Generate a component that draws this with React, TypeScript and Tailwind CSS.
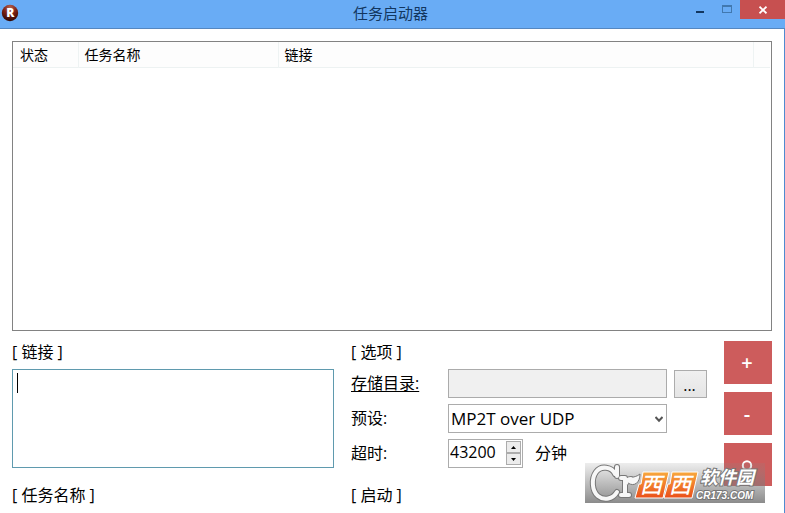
import type { ReactNode } from "react";

const buttonClass =
  "flex h-[43px] w-12 items-center justify-center bg-[#cd5c5c] pr-0.5 text-[20px] font-semibold leading-none text-white";

function Heading({ children }: { children: ReactNode }) {
  return <h2 className="h-[22px] text-[16px] leading-[22px]">{children}</h2>;
}

function TitleBar() {
  return (
    <header className="relative flex h-[29px] items-start justify-between border-b border-[#5587c0] bg-[#69acf5]">
      <svg className="ml-px mt-1 h-[18px] w-[18px]" viewBox="0 0 18 18" aria-hidden="true">
        <defs>
          <radialGradient id="badge" cx="0.5" cy="0.15" r="0.85">
            <stop offset="0" stopColor="#b5604c" />
            <stop offset="0.5" stopColor="#7a2014" />
            <stop offset="1" stopColor="#2c0605" />
          </radialGradient>
        </defs>
        <circle cx="9" cy="9" r="8.2" fill="url(#badge)" />
        <text x="9.3" y="13.2" textAnchor="middle" fontSize="12" fontWeight="800" fill="#fff" fontFamily="Open Sans, sans-serif">
          R
        </text>
      </svg>
      <h1 className="absolute inset-x-0 top-0 pr-1 text-center text-[15px] leading-[27px] text-[#12365f]">任务启动器</h1>
      <div className="relative flex">
        <button type="button" aria-label="最小化" className="flex h-[19px] w-7 items-start justify-center pt-[11px]">
          <span className="block h-0.5 w-2 bg-[#12365f]" />
        </button>
        <button type="button" aria-label="最大化" className="flex h-[19px] w-[26px] items-start justify-center pt-[5px]">
          <span className="block h-2 w-2.5 border border-t-2 border-[#4178af]" />
        </button>
        <button type="button" aria-label="关闭" className="flex h-[19px] w-[45px] items-center justify-center bg-[#c75050]">
          <svg className="h-2 w-2" viewBox="0 0 8 8" stroke="#fff" strokeWidth="1.8" aria-hidden="true">
            <path d="M0.5 0.7 7.5 7.3M7.5 0.7 0.5 7.3" />
          </svg>
        </button>
      </div>
    </header>
  );
}

function TaskTable() {
  return (
    <div className="h-[290px] border border-[#828282] bg-white pr-px">
      <table className="w-full table-fixed border-collapse text-left text-[14px] leading-6">
        <thead className="bg-[#fdfdfd]">
          <tr className="border-b border-[#edf2f2]">
            <th className="w-[65px] border-r border-[#eef3f3] pl-[7px] pt-px font-normal">状态</th>
            <th className="w-[200px] border-r border-[#eef3f3] pl-1.5 pt-px font-normal">任务名称</th>
            <th className="border-r border-[#eef3f3] pl-1.5 pt-px font-normal">链接</th>
            <th className="w-[17px]" />
          </tr>
        </thead>
      </table>
    </div>
  );
}

function Emblem({ stroke, width }: { stroke: string; width: number }) {
  return (
    <g fill="none" stroke={stroke} strokeLinecap="round" strokeLinejoin="round">
      <path strokeWidth={width} d="M32 4V13M30 11C27 4 16 2 11 9C6 16 7 28 13 33C19 38 28 36 32 29" />
      <path strokeWidth={width} d="M36 15H40V32M36 32H44M41 20C42 17 44 16 46 16" />
    </g>
  );
}

function Watermark() {
  return (
    <svg className="pointer-events-none absolute bottom-2.5 right-5 h-10 w-[180px]" viewBox="0 0 180 40" role="img" aria-label="西西软件园 CR173.COM">
      <defs>
        <linearGradient id="shade" x1="0" y1="0" x2="0" y2="1">
          <stop offset="0" stopColor="#888" stopOpacity="0.15" />
          <stop offset="0.5" stopColor="#7c7c7c" stopOpacity="0.5" />
          <stop offset="1" stopColor="#777" stopOpacity="0.85" />
        </linearGradient>
        <linearGradient id="orange" x1="0" y1="0" x2="0" y2="1">
          <stop offset="0" stopColor="#f8a83c" />
          <stop offset="1" stopColor="#ea4f1a" />
        </linearGradient>
      </defs>
      <rect width="180" height="40" fill="url(#shade)" />
      <Emblem stroke="#777" width={6} />
      <path d="M43 20C44 12 49 16 55 11C55 20 49 24 43 20Z" fill="#f7f7f7" stroke="#777" />
      <Emblem stroke="#f7f7f7" width={4} />
      <g fill="url(#orange)" stroke="#fff" strokeWidth="1" strokeLinejoin="round">
        <path d="M58 9H84L78 35H50L54 21H56Z" />
        <path d="M87 9H113L107 35H79L83 21H85Z" />
      </g>
      <g fill="#fff" fontSize="22" fontStyle="italic" fontWeight="500" fontFamily="Noto Sans CJK SC, sans-serif">
        <text x="55" y="30">西</text>
        <text x="84" y="30">西</text>
      </g>
      <g fill="#fff" stroke="#777" strokeWidth="2" paintOrder="stroke" fontStyle="italic" fontWeight="700">
        <text x="115" y="21" fontSize="18" fontFamily="Noto Sans CJK SC, sans-serif">软件园</text>
        <text x="111" y="36" fontSize="10" fontFamily="Liberation Sans, sans-serif">CR173.COM</text>
      </g>
    </svg>
  );
}

export default function App() {
  return (
    <div className="relative flex min-h-screen flex-col overflow-hidden bg-white font-['Open_Sans','Noto_Sans_CJK_SC',sans-serif] text-black">
      <TitleBar />
      <main className="flex-1 border-r border-[#4f8ad0] px-3 pt-3">
        <TaskTable />
        <div className="mt-2.5 grid grid-cols-[minmax(0,1fr)_356px_48px] gap-[17px]">
          <section>
            <Heading>
              <label htmlFor="links">[ 链接 ]</label>
            </Heading>
            <div className="relative mt-1.5">
              <textarea id="links" className="block h-[99px] w-full resize-none border border-[#5f9aae] px-1 outline-none" />
              <span className="absolute left-[5px] top-1 h-5 w-px bg-black" />
            </div>
            <div className="mt-4">
              <Heading>[ 任务名称 ]</Heading>
            </div>
          </section>

          <section>
            <Heading>[ 选项 ]</Heading>
            <div className="mt-1.5 grid grid-cols-[97px_minmax(0,1fr)] gap-y-1.5 text-[16px] leading-[29px]">
              <label htmlFor="folder" className="underline underline-offset-2">存储目录:</label>
              <div className="flex items-end gap-[7px]">
                <input id="folder" readOnly className="h-[29px] w-[219px] border border-[#ababab] bg-[#f0f0f0] px-1" />
                <button type="button" aria-label="浏览" className="h-7 w-[33px] border border-[#acacac] bg-linear-to-b from-[#f0f0f0] to-[#e5e5e5] pr-0.5 text-center text-[16px] leading-7">
                  ...
                </button>
              </div>

              <label htmlFor="preset">预设:</label>
              <div className="relative w-[219px]">
                <select id="preset" className="block h-[29px] w-full appearance-none border border-[#acacac] bg-white pl-0.5 pr-5 text-[17px] leading-[26px]">
                  <option>MP2T over UDP</option>
                </select>
                <svg className="pointer-events-none absolute right-1 top-3 h-[7px] w-2" viewBox="0 0 8 7" fill="none" stroke="#555" strokeWidth="2" aria-hidden="true">
                  <path d="M0.5 1 4 4.7 7.5 1" />
                </svg>
              </div>

              <label htmlFor="timeout">超时:</label>
              <div className="flex">
                <div className="flex h-[29px] w-[75px] border border-[#acacac] p-px">
                  <input id="timeout" defaultValue="43200" className="h-[23px] min-w-0 flex-1 leading-[23px] outline-none" />
                  <div className="flex w-[15px] flex-col">
                    <button type="button" aria-label="增加" className="flex h-3 items-center justify-center border border-[#acacac] bg-[#ececec]">
                      <svg className="h-[3px] w-[5px]" viewBox="0 0 5 3" aria-hidden="true"><path d="M0 3 2.5 0 5 3Z" /></svg>
                    </button>
                    <button type="button" aria-label="减少" className="flex h-3 items-center justify-center border border-[#acacac] bg-[#ececec]">
                      <svg className="h-[3px] w-[5px]" viewBox="0 0 5 3" aria-hidden="true"><path d="M0 0 2.5 3 5 0Z" /></svg>
                    </button>
                  </div>
                </div>
                <span className="ml-3">分钟</span>
              </div>
            </div>
            <div className="mt-4">
              <Heading>[ 启动 ]</Heading>
            </div>
          </section>

          <div className="flex flex-col gap-2">
            <button type="button" aria-label="添加" className={buttonClass}>+</button>
            <button type="button" aria-label="删除" className={buttonClass}>-</button>
            <button type="button" aria-label="录制" className={buttonClass}>
              <svg className="h-3 w-3" viewBox="0 0 12 12" aria-hidden="true">
                <circle cx="6" cy="6.5" r="4.2" fill="none" stroke="#fff" strokeWidth="2" />
              </svg>
            </button>
          </div>
        </div>
      </main>
      <Watermark />
    </div>
  );
}
